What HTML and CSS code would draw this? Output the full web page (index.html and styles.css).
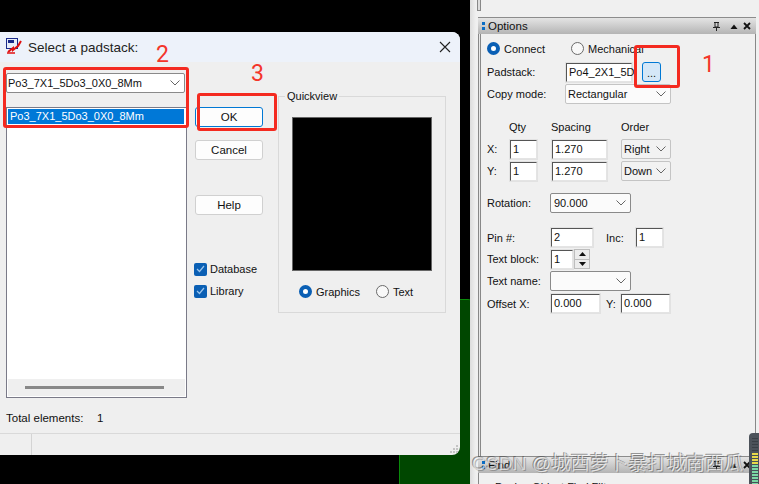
FILE: index.html
```html
<!DOCTYPE html>
<html lang="en">
<head>
<meta charset="utf-8">
<title>Select a padstack</title>
<link rel="stylesheet" href="styles.css">
</head>
<body>
<div class="desktop">
  <div class="board"></div>

  <section class="dialog">
    <header class="dlg-title">
      <svg class="app-icon" width="16" height="16" viewBox="0 0 16 16">
        <rect x="0.5" y="0.5" width="11" height="10" fill="#e8eef8" stroke="#1b2a8a"/>
        <rect x="2" y="2" width="6" height="3" fill="#1b2a8a"/>
        <path d="M2 14 L7 10 L7 12 L12 8 L15 3" fill="none" stroke="#e01010" stroke-width="2"/>
        <path d="M1 15 H9" stroke="#e01010" stroke-width="1.4"/>
      </svg>
      <span class="dlg-name">Select a padstack:</span>
      <svg class="dlg-close" width="12" height="12" viewBox="0 0 12 12"><path d="M1 1 L11 11 M11 1 L1 11" stroke="#222" stroke-width="1.1"/></svg>
    </header>
    <div class="dlg-body">
      <div class="col-list">
        <div class="combo">
          <span>Po3_7X1_5Do3_0X0_8Mm</span>
          <svg class="chev" width="10" height="6" viewBox="0 0 10 6"><path d="M0.5 0.5 L5 5 L9.5 0.5" fill="none" stroke="#666"/></svg>
        </div>
        <div class="listbox">
          <div class="list-item">Po3_7X1_5Do3_0X0_8Mm</div>
          <div class="list-space"></div>
          <div class="hscroll"><div class="hthumb"></div></div>
        </div>
      </div>
      <div class="col-btn">
        <button class="btn btn-ok">OK</button>
        <button class="btn btn-cancel">Cancel</button>
        <button class="btn btn-help">Help</button>
        <label class="check check-db"><span class="box"><svg width="9" height="8" viewBox="0 0 9 8"><path d="M1 4 L3.5 6.5 L8 1" fill="none" stroke="#9cc6ee" stroke-width="1.2"/></svg></span>Database</label>
        <label class="check"><span class="box"><svg width="9" height="8" viewBox="0 0 9 8"><path d="M1 4 L3.5 6.5 L8 1" fill="none" stroke="#9cc6ee" stroke-width="1.2"/></svg></span>Library</label>
      </div>
      <fieldset class="quick">
        <legend>Quickview</legend>
        <div class="preview"></div>
        <div class="quick-radios">
          <span class="radio on"></span><span class="r-text r-graphics">Graphics</span>
          <span class="radio"></span><span class="r-text">Text</span>
        </div>
      </fieldset>
    </div>
    <div class="total"><span class="total-label">Total elements:</span><span>1</span></div>
    <footer class="status">
      <div class="status-cell"></div>
      <svg class="grip" width="10" height="10" viewBox="0 0 10 10"><path d="M7 1h2v2H7zM4 4h2v2H4zM7 4h2v2H7zM1 7h2v2H1zM4 7h2v2H4zM7 7h2v2H7z" fill="#c4c4c4"/></svg>
    </footer>
  </section>

  <aside class="panel">
    <div class="panel-top"></div>
    <div class="bar bar-options">
      <span class="grab"></span><span class="bar-name">Options</span>
      <span class="bar-icons">
        <svg class="pin" width="9" height="10" viewBox="0 0 9 10"><path d="M2 1.5H7M3 1.5V6H6V1.5M1 6.5H8M4.5 6.5V10" fill="none" stroke="#222"/></svg>
        <svg width="8" height="5" viewBox="0 0 8 5"><path d="M0.5 5 L4 0.5 L7.5 5Z" fill="#111"/></svg>
        <svg width="8" height="8" viewBox="0 0 8 8"><path d="M1 1 L7 7 M7 1 L1 7" stroke="#111" stroke-width="1.8"/></svg>
      </span>
    </div>
    <form class="opts">
      <div class="row r-mode">
        <span class="radio on"></span><span class="r-text w-connect">Connect</span>
        <span class="radio"></span><span class="r-text">Mechanical</span>
      </div>
      <div class="row r-pad">
        <span class="lbl w79">Padstack:</span>
        <span class="field f-pad">Po4_2X1_5D</span>
        <span class="dots">...</span>
      </div>
      <div class="row r-copy">
        <span class="lbl w78">Copy mode:</span>
        <span class="sel s-copy">Rectangular<svg class="chev" width="10" height="6" viewBox="0 0 10 6"><path d="M0.5 0.5 L5 5 L9.5 0.5" fill="none" stroke="#666"/></svg></span>
      </div>
      <div class="row r-head">
        <span class="h-qty">Qty</span><span class="h-spacing">Spacing</span><span>Order</span>
      </div>
      <div class="row r-x">
        <span class="lbl w23">X:</span>
        <span class="field f-qty">1</span>
        <span class="field f-spacing">1.270</span>
        <span class="sel s-order">Right<svg class="chev" width="10" height="6" viewBox="0 0 10 6"><path d="M0.5 0.5 L5 5 L9.5 0.5" fill="none" stroke="#666"/></svg></span>
      </div>
      <div class="row r-y">
        <span class="lbl w23">Y:</span>
        <span class="field f-qty">1</span>
        <span class="field f-spacing">1.270</span>
        <span class="sel s-order">Down<svg class="chev" width="10" height="6" viewBox="0 0 10 6"><path d="M0.5 0.5 L5 5 L9.5 0.5" fill="none" stroke="#666"/></svg></span>
      </div>
      <div class="row r-rot">
        <span class="lbl w63">Rotation:</span>
        <span class="sel s-wide">90.000<svg class="chev" width="10" height="6" viewBox="0 0 10 6"><path d="M0.5 0.5 L5 5 L9.5 0.5" fill="none" stroke="#666"/></svg></span>
      </div>
      <div class="row r-pin">
        <span class="lbl w64">Pin #:</span>
        <span class="field f-pin">2</span>
        <span class="lbl-inc">Inc:</span>
        <span class="field f-inc">1</span>
      </div>
      <div class="row r-block">
        <span class="lbl w64">Text block:</span>
        <span class="field f-block">1</span>
        <span class="spin">
          <span class="spin-btn"><svg width="7" height="4" viewBox="0 0 7 4"><path d="M0 4 L3.5 0 L7 4Z" fill="#111"/></svg></span>
          <span class="spin-btn"><svg width="7" height="4" viewBox="0 0 7 4"><path d="M0 0 L3.5 4 L7 0Z" fill="#111"/></svg></span>
        </span>
      </div>
      <div class="row r-name">
        <span class="lbl w63">Text name:</span>
        <span class="sel s-wide s-empty"><svg class="chev" width="10" height="6" viewBox="0 0 10 6"><path d="M0.5 0.5 L5 5 L9.5 0.5" fill="none" stroke="#666"/></svg></span>
      </div>
      <div class="row r-off">
        <span class="lbl w64">Offset X:</span>
        <span class="field f-off">0.000</span>
        <span class="lbl-y">Y:</span>
        <span class="field f-off">0.000</span>
      </div>
    </form>
    <div class="bar bar-find">
      <span class="grab"></span><span class="bar-name">Find</span>
      <span class="bar-icons">
        <svg class="pin" width="9" height="10" viewBox="0 0 9 10"><path d="M2 1.5H7M3 1.5V6H6V1.5M1 6.5H8M4.5 6.5V10" fill="none" stroke="#222"/></svg>
        <svg width="8" height="5" viewBox="0 0 8 5"><path d="M0.5 5 L4 0.5 L7.5 5Z" fill="#111"/></svg>
        <svg width="8" height="8" viewBox="0 0 8 8"><path d="M1 1 L7 7 M7 1 L1 7" stroke="#111" stroke-width="1.8"/></svg>
      </span>
    </div>
    <div class="find-tail">Design Object Find Filter</div>
  </aside>

  <div class="meter"></div>

  <div class="mark m1"></div>
  <div class="mark m2"></div>
  <div class="mark m3"></div>
  <span class="num n1">1</span>
  <span class="num n2">2</span>
  <span class="num n3">3</span>
  <div class="watermark">CSDN @城西萝卜暴打城南西瓜</div>
</div>
</body>
</html>
```
FILE: styles.css
```css
* { box-sizing: border-box; }
html, body { margin: 0; padding: 0; background: #000; }
.desktop {
  position: relative;
  width: 759px;
  height: 484px;
  overflow: hidden;
  background: #000;
  font-family: "Liberation Sans", Arial, sans-serif;
  font-size: 11px;
  color: #111;
}

/* PCB copper behind the windows */
.board {
  position: absolute;
  left: 399px;
  top: 299px;
  width: 75px;
  height: 185px;
  background: #004700;
  border-left: 1px solid #0a8a0a;
  border-top: 1px solid #0a8a0a;
  border-top-right-radius: 6px;
}

/* Dialog */
.dialog {
  position: absolute;
  left: 0;
  top: 32px;
  width: 460px;
  height: 423px;
  background: #efefef;
  border-radius: 0 8px 8px 0;
  display: flex;
  flex-direction: column;
  overflow: hidden;
}
.dlg-title {
  height: 30px;
  flex: none;
  background: #edf2fa;
  display: flex;
  align-items: center;
  padding: 0 9px 0 6px;
}
.app-icon { flex: none; margin: -3px 6px 0 0; }
.dlg-name { font-size: 13.5px; color: #222; flex: 1; }
.dlg-body {
  flex: none;
  height: 336px;
  display: flex;
  padding: 11px 0 0 6px;
}
.col-list { width: 189px; flex: none; }
.combo {
  width: 179px;
  height: 20px;
  background: #fff;
  border: 1px solid #8a8a8a;
  border-radius: 2px;
  display: flex;
  align-items: center;
  justify-content: space-between;
  padding: 0 4px 0 1px;
}
.listbox {
  margin-top: 14px;
  width: 181px;
  height: 291px;
  border: 1px solid #7a7a88;
  background: #fff;
  padding: 1px;
  display: flex;
  flex-direction: column;
}
.list-item {
  height: 15px;
  line-height: 15px;
  background: #0078d7;
  color: #fff;
  padding-left: 2px;
  margin-right: 1px;
}
.list-space { flex: 1; }
.hscroll {
  height: 17px;
  background: #efefef;
  display: flex;
  align-items: center;
  padding-left: 17px;
}
.hthumb { width: 139px; height: 3px; background: #888; }

.col-btn {
  width: 83px;
  flex: none;
  display: flex;
  flex-direction: column;
  align-items: flex-start;
}
.btn {
  width: 68px;
  height: 20px;
  padding: 0;
  background: #fdfdfd;
  border: 1px solid #d0d0d0;
  border-radius: 3px;
  font: inherit;
  font-size: 11.5px;
  color: #111;
}
.btn-ok { margin-top: 34px; border-color: #0078d4; }
.btn-cancel { margin-top: 13px; }
.btn-help { margin-top: 35px; }
.check { display: flex; align-items: center; height: 14px; margin-left: -1px; }
.check-db { margin-top: 47px; margin-bottom: 8px; }
.box {
  width: 13px;
  height: 13px;
  background: #0a5fb4;
  border-radius: 2px;
  margin-right: 3px;
  display: flex;
  align-items: center;
  justify-content: center;
}

.quick {
  margin: 17px 0 0 0;
  padding: 0;
  width: 168px;
  height: 223px;
  border: 1px solid #d9d9d9;
}
.quick legend { margin-left: 6px; padding: 0 2px; line-height: 13px; }
.preview {
  width: 140px;
  height: 154px;
  margin: 14px 0 0 13px;
  background: #000;
  border: 1px solid #666;
}
.quick-radios { display: flex; align-items: center; margin: 14px 0 0 20px; }
.r-graphics { width: 60px; }

.radio {
  width: 13px;
  height: 13px;
  border-radius: 50%;
  border: 1px solid #6a6a6a;
  background: #f8f8f8;
  flex: none;
  margin-right: 4px;
}
.radio.on {
  background: #fff;
  border: 4px solid #0a5fb4;
}

.total { flex: none; height: 35px; display: flex; align-items: center; padding: 4px 0 0 6px; font-size: 11.5px; }
.total-label { width: 91px; }
.status {
  flex: 1;
  border-top: 1px solid #d9d9d9;
  display: flex;
  justify-content: space-between;
  align-items: flex-end;
}
.status-cell { width: 32px; height: 100%; border-right: 1px solid #d4d4d4; }
.grip { margin: 0 1px 1px 0; }

/* Options panel */
.panel {
  position: absolute;
  left: 470px;
  top: 0;
  width: 289px;
  height: 484px;
  background: linear-gradient(90deg, #dcdcdc 0, #f0f0f0 6px);
  padding-left: 8px;
  overflow: hidden;
}
.panel-top {
  height: 11px;
  width: 4px;
  border: 1px solid #888;
  border-top: 0;
  background: #ddd;
  margin-left: -1px;
  margin-bottom: 6px;
}
.bar {
  width: 278px;
  height: 17px;
  background: linear-gradient(180deg, #e4e4e4 0, #b4b4b4 100%);
  border-top: 1px solid #8c8c8c;
  display: flex;
  align-items: center;
  padding: 0 5px 0 4px;
}
.grab {
  width: 3px;
  height: 8px;
  margin-right: 3px;
  background: linear-gradient(180deg, #0a6cc4 0 3px, transparent 3px 5px, #0a6cc4 5px);
}
.bar-name { flex: 1; font-size: 11.5px; }
.bar-icons { display: flex; align-items: center; gap: 5px; }
.pin { margin-right: 4px; }
.opts {
  width: 278px;
  height: 422px;
  box-shadow: inset 1px 0 0 #888, inset 2px 0 0 #e8e8e8, inset 3px 0 0 #888, inset -1px 0 0 #888;
  padding: 5px 0 0 9px;
}
.row { display: flex; align-items: center; height: 20px; white-space: nowrap; }
.r-mode { height: 19px; }
.r-pad { margin-top: 4px; }
.r-copy { margin-top: 2px; }
.r-head { height: 18px; margin-top: 14px; }
.r-x { margin-top: 3px; }
.r-y { margin-top: 2px; }
.r-rot { margin-top: 12px; }
.r-pin { height: 19px; margin-top: 15px; }
.r-block { margin-top: 2px; }
.r-name { margin-top: 2px; }
.r-off { height: 19px; margin-top: 3px; }
.w-connect { width: 67px; }
.w79 { width: 79px; }
.w78 { width: 78px; }
.w23 { width: 23px; }
.w63 { width: 63px; }
.w64 { width: 64px; }
.h-qty { margin-left: 22px; width: 42px; }
.h-spacing { width: 70px; }
.field {
  height: 19px;
  line-height: 17px;
  background: #fff;
  border: 1px solid;
  border-color: #555 #e4e4e4 #e4e4e4 #555;
  box-shadow: 0 0 0 1px #e2e2e2;
  padding-left: 2px;
  flex: none;
}
.f-pad { width: 66px; }
.f-qty { width: 27px; margin-right: 15px; }
.f-spacing { width: 55px; margin-right: 14px; }
.f-pin { width: 42px; }
.f-inc { width: 27px; }
.f-block { width: 22px; }
.f-off { width: 49px; }
.lbl-inc { width: 30px; margin-left: 13px; }
.lbl-y { width: 15px; margin-left: 6px; }
.dots {
  width: 19px;
  height: 20px;
  margin-left: 10px;
  background: #d5e7f7;
  border: 1px solid #0078d4;
  border-radius: 3px;
  text-align: center;
  line-height: 20px;
}
.sel {
  height: 20px;
  background: #fbfbfb;
  border: 1px solid #c4c4c4;
  border-radius: 2px;
  display: flex;
  align-items: center;
  justify-content: space-between;
  padding: 0 4px 0 2px;
  flex: none;
}
.s-copy { width: 106px; }
.s-order { width: 50px; background: #f2f2f2; }
.s-wide { width: 81px; border-color: #8a8a8a; padding-left: 3px; }
.s-empty { justify-content: flex-end; }
.spin {
  width: 16px;
  height: 20px;
  margin-left: 1px;
  padding: 1px;
  background: #bdbdbd;
  display: flex;
  flex-direction: column;
  gap: 1px;
}
.spin-btn {
  flex: 1;
  background: #ececec;
  display: flex;
  align-items: center;
  justify-content: center;
}
.find-tail { width: 278px; height: 11px; padding: 8px 0 0 17px; box-shadow: inset 1px 0 0 #888; }

.meter {
  position: absolute;
  left: 749px;
  top: 433px;
  width: 10px;
  height: 51px;
  border-radius: 4px 0 0 0;
  background:
    repeating-linear-gradient(180deg, #3a3f46 0 1px, transparent 1px 3px) 3px 5px / 6px 14px no-repeat,
    repeating-linear-gradient(180deg, #e8d84a 0 2px, #47505a 2px 3px) 3px 20px / 6px 12px no-repeat,
    repeating-linear-gradient(180deg, #7cd8a4 0 2px, #47505a 2px 3px) 3px 32px / 6px 19px no-repeat,
    #4c525a;
}

/* Annotations */
.mark {
  position: absolute;
  border: 3px solid #f42a20;
  border-radius: 3px;
}
.m1 { left: 634px; top: 45px; width: 46px; height: 43px; }
.m2 { left: 3px; top: 67px; width: 186px; height: 61px; }
.m3 { left: 197px; top: 93px; width: 80px; height: 38px; }
.num {
  position: absolute;
  font-family: Roboto, "Liberation Sans", sans-serif;
  font-size: 23px;
  line-height: 24px;
  color: #f4352a;
}
.n1 { left: 702px; top: 53px; }
.n2 { left: 156px; top: 43px; }
.n3 { left: 251px; top: 62px; }

.watermark {
  position: absolute;
  left: 472px;
  top: 453px;
  font-family: "Liberation Sans", "Noto Sans CJK SC", sans-serif;
  font-size: 19px;
  letter-spacing: 0.2px;
  line-height: 22px;
  white-space: nowrap;
  color: rgba(255, 255, 255, 0.65);
  text-shadow: -1px -1px 0 rgba(70, 70, 70, 0.55), 1px 1px 0 rgba(70, 70, 70, 0.35);
}
```
